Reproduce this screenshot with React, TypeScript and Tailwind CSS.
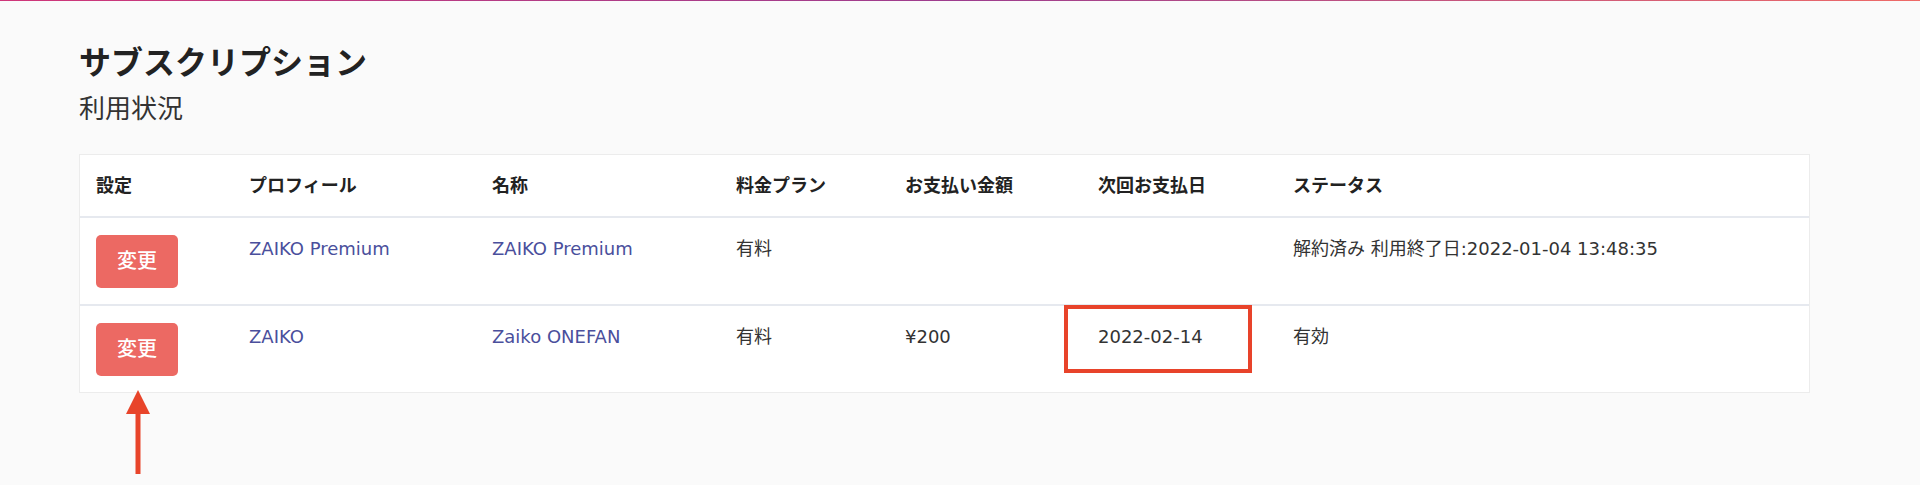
import React from 'react'

const font = { fontFamily: '"DejaVu Sans", "Noto Sans CJK JP", sans-serif' }

const cols = 'grid grid-cols-[153px_243px_244px_169px_193px_195px_1fr]'

const headers = ['設定', 'プロフィール', '名称', '料金プラン', 'お支払い金額', '次回お支払日', 'ステータス']

type Row = { profile: string; name: string; plan: string; amount: string; next: string; status: string; marked?: boolean }

const rows: Row[] = [
  { profile: 'ZAIKO Premium', name: 'ZAIKO Premium', plan: '有料', amount: '', next: '', status: '解約済み 利用終了日:2022-01-04 13:48:35' },
  { profile: 'ZAIKO', name: 'Zaiko ONEFAN', plan: '有料', amount: '¥200', next: '2022-02-14', status: '有効', marked: true },
]

const ChangeButton = () => (
  <button className="w-[82px] h-[53px] rounded-[5px] bg-[#ec6963] text-white text-[20px] font-medium">
    変更
  </button>
)

const Cell = ({ children, className = 'text-[#333]' }: { children?: React.ReactNode; className?: string }) => (
  <div className={`pl-4 pt-[17px] pb-4 text-[18px] leading-[27px] ${className}`}>{children}</div>
)

export default function App() {
  return (
    <div className="min-h-screen w-full bg-[#fafafa] relative" style={font}>
      <div className="h-px w-full bg-gradient-to-r from-[#cf3679] via-[#9d3c8e] to-[#ee6a66]" />
      <div className="pl-[79px] pr-[110px] pt-[38px]">
        <h1 className="text-[32px] font-bold leading-[48px] text-[#222]">サブスクリプション</h1>
        <h2 className="text-[26px] leading-[39px] text-[#333] mt-[3px]">利用状況</h2>

        <div className="mt-[25px] bg-white border border-[#ececec]">
          <div className={`${cols} h-[61px] items-center`}>
            {headers.map((h) => (
              <div key={h} className="pl-4 text-[18px] font-bold text-[#222]">{h}</div>
            ))}
          </div>
          {rows.map((r, i) => (
            <div key={i} className={`${cols} border-t-2 border-[#e6e9ef] h-[88px]`}>
              <Cell><ChangeButton /></Cell>
              <Cell className="text-[#4a4f9c]">{r.profile}</Cell>
              <Cell className="text-[#4a4f9c]">{r.name}</Cell>
              <Cell>{r.plan}</Cell>
              <Cell>{r.amount}</Cell>
              <Cell className="relative text-[#333]">
                {r.next}
                {r.marked && (
                  <div className="absolute left-[-18px] top-[-1px] w-[188px] h-[68px] border-4 border-[#e8432a]" />
                )}
              </Cell>
              <Cell>{r.status}</Cell>
            </div>
          ))}
        </div>
      </div>

      <svg className="absolute left-[124px] top-[389px]" width="28" height="88" viewBox="0 0 28 88">
        <polygon points="14,1 26,25 2,25" fill="#e8442a" />
        <rect x="11.5" y="22" width="5" height="63" fill="#e8442a" />
      </svg>
    </div>
  )
}
